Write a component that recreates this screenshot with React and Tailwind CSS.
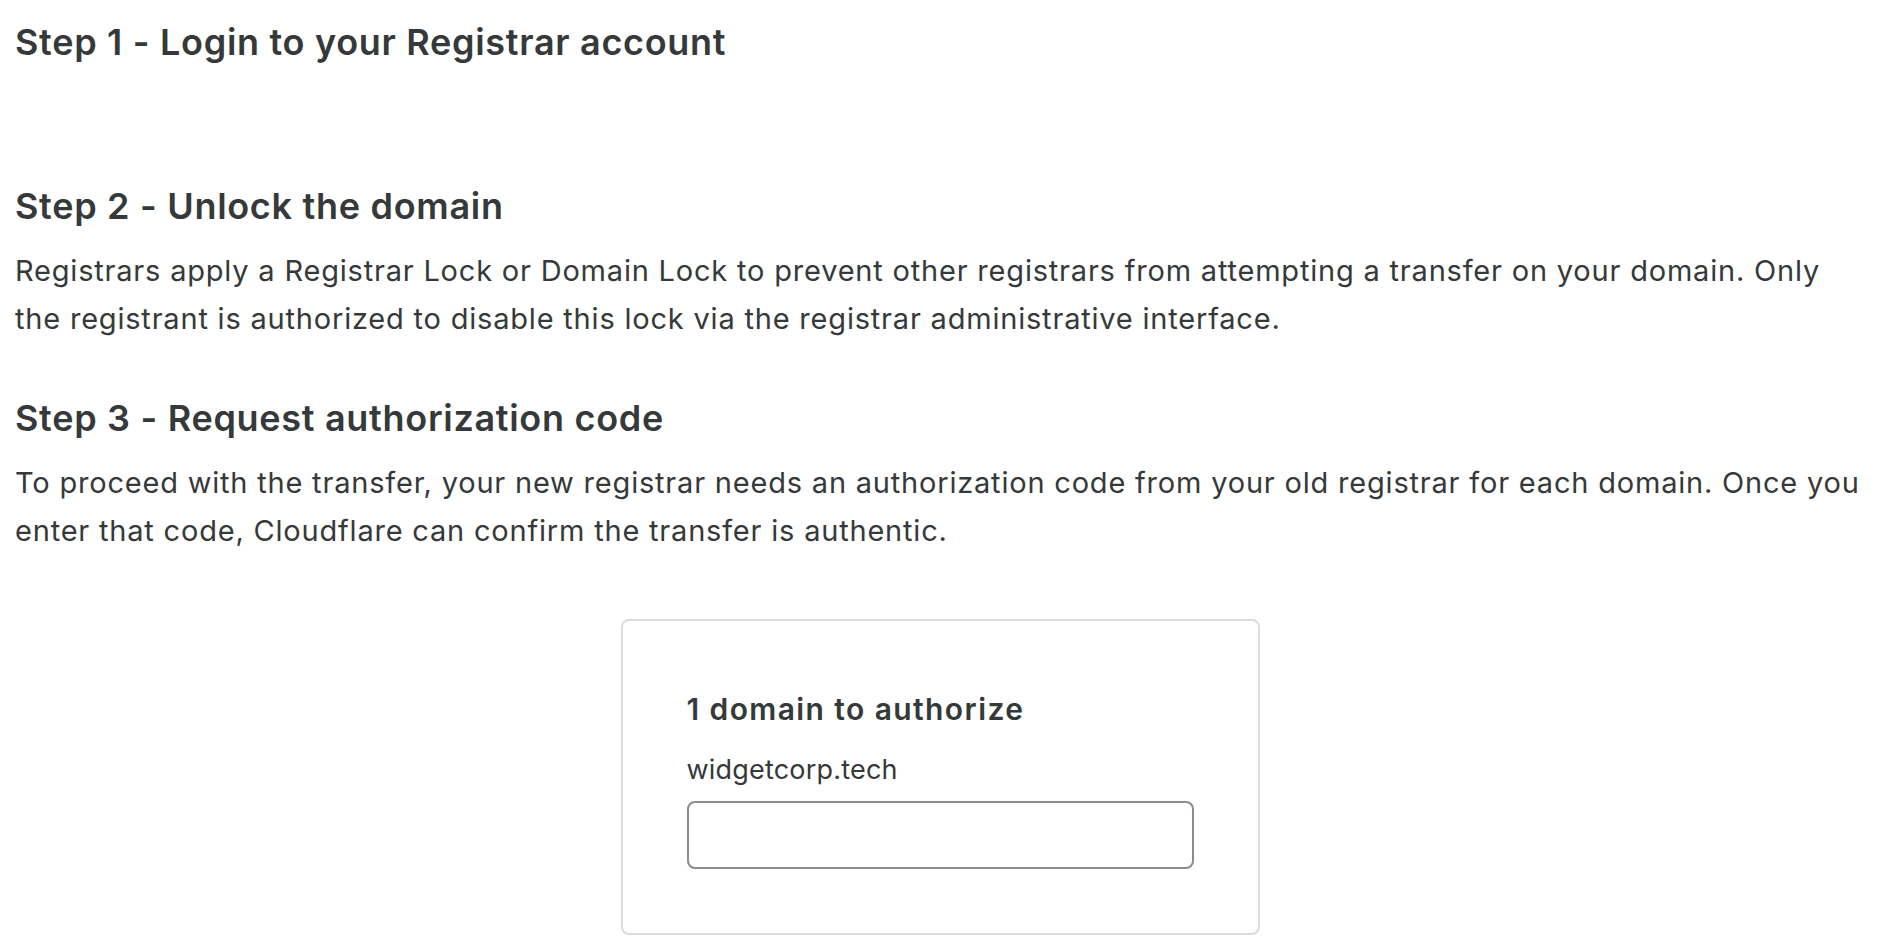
export default function App() {
  return (
    <div className="min-h-screen bg-white text-[#36393a] font-['Inter','Liberation_Sans',sans-serif]">
      <div className="pl-[15px] pr-[8px] pt-[18px]">
        <h3 className="text-[36px] leading-[48px] font-semibold tracking-[0.7px]">
          Step 1 - Login to your Registrar account
        </h3>
        <div className="h-[116px]" />

        <h3 className="text-[36px] leading-[48px] font-semibold tracking-[0.7px]">
          Step 2 - Unlock the domain
        </h3>
        <p className="mt-[17px] text-[29px] leading-[48px] tracking-[0.8px]">
          Registrars apply a Registrar Lock or Domain Lock to prevent other registrars from attempting a transfer on your domain. Only
          the registrant is authorized to disable this lock via the registrar administrative interface.
        </p>

        <h3 className="mt-[51px] text-[36px] leading-[48px] font-semibold tracking-[0.7px]">
          Step 3 - Request authorization code
        </h3>
        <p className="mt-[17px] text-[29px] leading-[48px] tracking-[0.8px]">
          To proceed with the transfer, your new registrar needs an authorization code from your old registrar for each domain. Once you
          enter that code, Cloudflare can confirm the transfer is authentic.
        </p>
      </div>

      <div className="mt-[64px] mx-auto w-[639px] border-2 border-[#dcdcdc] rounded-[8px] px-[64px] pt-[68px] pb-[64px]">
        <div className="text-[30px] leading-[40px] font-semibold tracking-[1.4px]">1 domain to authorize</div>
        <div className="mt-[21px] text-[27px] leading-[40px] tracking-[0.2px]">widgetcorp.tech</div>
        <input
          type="text"
          className="mt-[11px] block w-full h-[68px] border-2 border-[#8c8c8c] rounded-[8px] px-4 text-[26px] outline-none"
        />
      </div>
    </div>
  );
}
